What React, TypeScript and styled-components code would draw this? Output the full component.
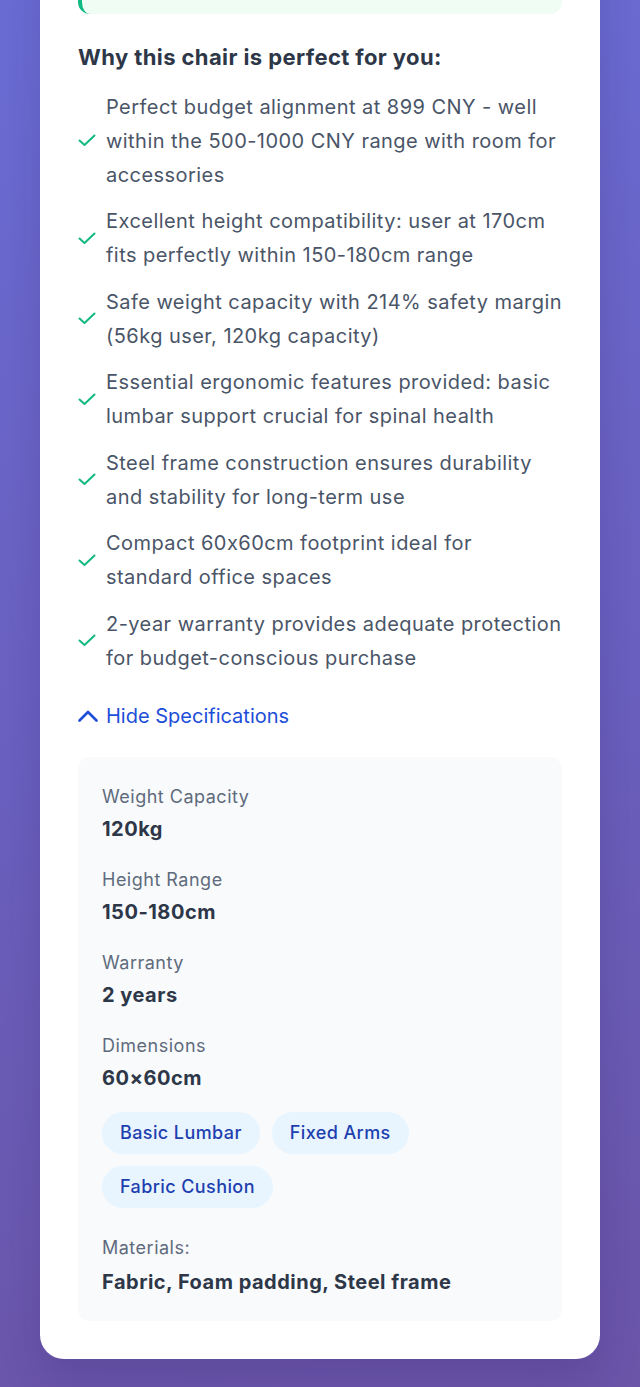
import React from "react";
import styled, { createGlobalStyle } from "styled-components";

const Global = createGlobalStyle`
  html, body { margin: 0; padding: 0; }
  body {
    min-height: 1387px;
    background: linear-gradient(170deg, #6a6cd4 0%, #6a60bf 50%, #6a55a8 100%);
    font-family: Inter, "Noto Sans", "Liberation Sans", sans-serif;
    -webkit-font-smoothing: antialiased;
  }
  * { box-sizing: border-box; }
`;

const Page = styled.div`
  padding: 0 40px 29px;
  overflow: hidden;
`;

const Card = styled.section`
  background: #ffffff;
  border-radius: 24px;
  margin-top: -120px;
  padding: 38px 38px 38px;
  box-shadow: 0 20px 40px rgba(40, 20, 90, 0.18);
`;

const Verdict = styled.div`
  height: 96px;
  background: #f0fdf4;
  border-left: 4px solid #10b981;
  border-radius: 12px;
`;

const Heading = styled.h3`
  margin: 29px 0 18px;
  font-size: 22px;
  line-height: 28.6px;
  font-weight: 700;
  letter-spacing: 0.4px;
  color: #2d3748;
`;

const ReasonList = styled.ul`
  list-style: none;
  margin: 0;
  padding: 0;
  display: flex;
  flex-direction: column;
  gap: 12.5px;
`;

const Reason = styled.li`
  display: flex;
  align-items: center;
  gap: 10px;
  font-size: 20px;
  line-height: 34px;
  letter-spacing: 0.45px;
  color: #4a5568;
`;

const CheckMark = styled.svg`
  flex: 0 0 auto;
  width: 18px;
  height: 13px;
  color: #10b981;
`;

const ToggleButton = styled.button`
  display: flex;
  align-items: center;
  gap: 8px;
  margin: 26px 0 26px;
  padding: 0;
  border: none;
  background: none;
  font-family: inherit;
  font-size: 20px;
  line-height: 30px;
  color: #1d4ed8;
  cursor: pointer;
`;

const Chevron = styled.svg`
  width: 20px;
  height: 12px;
  color: #1d4ed8;
`;

const SpecBox = styled.div`
  background: #f8fafc;
  border-radius: 12px;
  padding: 26px 24px 24px;
`;

const SpecItem = styled.div`
  margin-bottom: 22px;
`;

const SpecLabel = styled.div`
  font-size: 18px;
  line-height: 27px;
  letter-spacing: 0.5px;
  color: #5f6b7c;
`;

const SpecValue = styled.div`
  margin-top: 4px;
  font-size: 20px;
  line-height: 30px;
  font-weight: 700;
  letter-spacing: 0.5px;
  color: #2d3748;
`;

const Tags = styled.div`
  display: flex;
  flex-wrap: wrap;
  gap: 12px;
  margin-top: -3px;
  margin-bottom: 26px;
  max-width: 330px;
`;

const Tag = styled.span`
  display: inline-flex;
  align-items: center;
  height: 42px;
  padding: 0 18px;
  border-radius: 21px;
  background: #e8f5ff;
  color: #1e40af;
  font-size: 18px;
  font-weight: 500;
  letter-spacing: 0.4px;
`;

const MaterialValue = styled(SpecValue)`
  margin-top: 6px;
`;

const reasons = [
  "Perfect budget alignment at 899 CNY - well within the 500-1000 CNY range with room for accessories",
  "Excellent height compatibility: user at 170cm fits perfectly within 150-180cm range",
  "Safe weight capacity with 214% safety margin (56kg user, 120kg capacity)",
  "Essential ergonomic features provided: basic lumbar support crucial for spinal health",
  "Steel frame construction ensures durability and stability for long-term use",
  "Compact 60x60cm footprint ideal for standard office spaces",
  "2-year warranty provides adequate protection for budget-conscious purchase",
];

const specs = [
  ["Weight Capacity", "120kg"],
  ["Height Range", "150-180cm"],
  ["Warranty", "2 years"],
  ["Dimensions", "60×60cm"],
];

const features = ["Basic Lumbar", "Fixed Arms", "Fabric Cushion"];

export default function App() {
  return (
    <>
      <Global />
      <Page>
        <Card>
          <Verdict />
          <Heading>Why this chair is perfect for you:</Heading>
          <ReasonList>
            {reasons.map((r) => (
              <Reason key={r}>
                <CheckMark viewBox="0 0 18 13" fill="none">
                  <path
                    d="M1.5 6.5 L6.5 11 L16.5 1.5"
                    stroke="currentColor"
                    strokeWidth="2"
                    strokeLinecap="round"
                    strokeLinejoin="round"
                  />
                </CheckMark>
                <span>{r}</span>
              </Reason>
            ))}
          </ReasonList>
          <ToggleButton type="button">
            <Chevron viewBox="0 0 20 12" fill="none">
              <path
                d="M1.5 10.5 L10 2 L18.5 10.5"
                stroke="currentColor"
                strokeWidth="2.6"
                strokeLinecap="round"
                strokeLinejoin="round"
              />
            </Chevron>
            Hide Specifications
          </ToggleButton>
          <SpecBox>
            {specs.map(([label, value]) => (
              <SpecItem key={label}>
                <SpecLabel>{label}</SpecLabel>
                <SpecValue>{value}</SpecValue>
              </SpecItem>
            ))}
            <Tags>
              {features.map((f) => (
                <Tag key={f}>{f}</Tag>
              ))}
            </Tags>
            <div>
              <SpecLabel>Materials:</SpecLabel>
              <MaterialValue>Fabric, Foam padding, Steel frame</MaterialValue>
            </div>
          </SpecBox>
        </Card>
      </Page>
    </>
  );
}
